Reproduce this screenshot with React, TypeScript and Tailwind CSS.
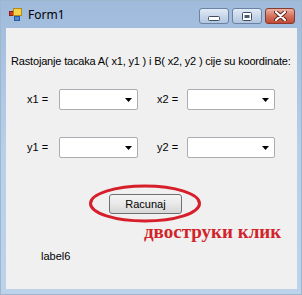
import React from 'react';

const ComboBox = ({ width }: { width: string }) => (
  <div className={`${width} h-[21px] bg-white border border-[#abadb3] rounded-[2px] flex items-center justify-end pr-[5px]`}>
    <svg width="7" height="4" viewBox="0 0 7 4">
      <path d="M0 0 H7 L3.5 4 Z" fill="#000" />
    </svg>
  </div>
);

const CaptionButton = ({ kind }: { kind: 'min' | 'max' | 'close' }) => {
  const close = kind === 'close';
  return (
    <div
      className={`w-[30px] h-[16px] rounded-[3px] border flex items-center justify-center ${
        close
          ? 'border-[#8a3a2f] bg-gradient-to-b from-[#eab2a4] via-[#d4735f] to-[#c04a36]'
          : 'border-[#6a82a3] bg-gradient-to-b from-[#e2ebf6] via-[#c9d7ea] to-[#b2c6e0]'
      }`}
    >
      {kind === 'min' && (
        <svg width="12" height="6" viewBox="0 0 12 6" className="mt-[5px]">
          <rect x="0.5" y="0.5" width="11" height="4" rx="1" fill="#fff" stroke="#3d4c60" />
        </svg>
      )}
      {kind === 'max' && (
        <svg width="10" height="9" viewBox="0 0 10 9">
          <rect x="0.5" y="0.5" width="9" height="8" rx="1" fill="#fff" stroke="#3d4c60" />
          <rect x="2.5" y="3" width="5" height="3" fill="#4a5a70" />
        </svg>
      )}
      {close && (
        <svg width="13" height="10" viewBox="0 0 13 10">
          <path d="M2 1 L11 9 M11 1 L2 9" stroke="#5a2018" strokeWidth="4" strokeLinecap="round" />
          <path d="M2 1 L11 9 M11 1 L2 9" stroke="#fff" strokeWidth="2.2" strokeLinecap="round" />
        </svg>
      )}
    </div>
  );
};

export default function App() {
  return (
    <div className="w-[302px] h-[295px] flex flex-col bg-gradient-to-b from-[#9fbadb] via-[#b8cfe9] to-[#bcd3ea] border border-[#9fb6d1]" style={{ fontFamily: '"Liberation Sans", Arial, sans-serif' }}>
      {/* Title bar */}
      <div className="h-[27px] flex items-center pl-[8px] pr-[6px]">
        <svg width="14" height="14" viewBox="0 0 14 14">
          <rect x="0.5" y="3.5" width="4" height="4" fill="#d23a2a" stroke="#8a1e14" />
          <rect x="4.5" y="0.5" width="8" height="7" fill="#f6d24a" stroke="#b58a14" />
          <rect x="5.5" y="8.5" width="5" height="4" fill="#4a8ad8" stroke="#2a5a9c" />
        </svg>
        <span className="ml-[5px] text-[12px] text-black leading-none" style={{ fontFamily: '"Noto Sans", sans-serif' }}>
          Form1
        </span>
        <div className="ml-auto flex gap-[3px] self-start mt-[7px]">
          <CaptionButton kind="min" />
          <CaptionButton kind="max" />
          <CaptionButton kind="close" />
        </div>
      </div>

      {/* Client area */}
      <div className="relative ml-[5px] mr-[4px] h-[261px] bg-[#f0f0f0] text-[11px] text-black">
        <div className="pt-[27px] pl-[5px] leading-[13px] whitespace-nowrap tracking-[-0.17px]">
          Rastojanje tacaka A( x1, y1 ) i B( x2, y2 ) cije su koordinate:
        </div>

        <div className="mt-[21px] flex items-center pl-[21px]">
          <span className="w-[32px]">x1 =</span>
          <ComboBox width="w-[79px]" />
          <span className="ml-[19px] w-[30px]">x2 =</span>
          <ComboBox width="w-[88px]" />
        </div>

        <div className="mt-[27px] flex items-center pl-[21px]">
          <span className="w-[32px]">y1 =</span>
          <ComboBox width="w-[79px]" />
          <span className="ml-[19px] w-[30px]">y2 =</span>
          <ComboBox width="w-[88px]" />
        </div>

        <div className="mt-[36px] pl-[103px]">
          <div className="w-[73px] h-[20px] rounded-[3px] border border-[#707070] bg-gradient-to-b from-[#f4f4f4] via-[#e8e8e8] to-[#d6d6d6] flex items-center justify-center">
            Racunaj
          </div>
        </div>

        <div
          className="mt-[8px] pl-[138px] text-[19px] font-bold leading-none text-[#d2232a] whitespace-nowrap"
          style={{ fontFamily: '"Liberation Serif", "Times New Roman", serif' }}
        >
          двоструки клик
        </div>

        <div className="mt-[9px] pl-[35px] leading-[13px]">label6</div>

        {/* red annotation ellipse */}
        <svg className="absolute left-[82px] top-[156px] pointer-events-none" width="114" height="40" viewBox="0 0 114 40">
          <ellipse cx="57" cy="19.5" rx="54.5" ry="17.5" fill="none" stroke="#d61f2a" strokeWidth="3" />
        </svg>
      </div>
    </div>
  );
}
